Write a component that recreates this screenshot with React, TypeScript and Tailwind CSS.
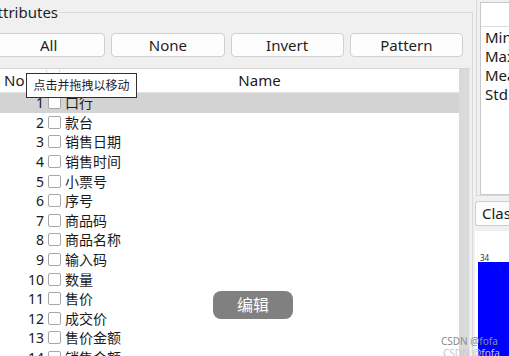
import React from "react";

const ROWS = [
  "口行",
  "款台",
  "销售日期",
  "销售时间",
  "小票号",
  "序号",
  "商品码",
  "商品名称",
  "输入码",
  "数量",
  "售价",
  "成交价",
  "售价金额",
  "销售金额",
];

const FONT = { fontFamily: '"Noto Sans", "Noto Sans CJK SC", sans-serif' };

function ToolButton({ label }: { label: string }) {
  return (
    <button className="h-[24px] rounded-[4px] border border-[#d0d0d0] bg-[#fdfdfd] text-[15px] leading-none text-[#1f1f1f]">
      {label}
    </button>
  );
}

export default function App() {
  return (
    <div
      className="relative flex h-[356px] w-[509px] overflow-hidden bg-[#f0f0f0] text-[#1a1a1a]"
      style={FONT}
    >
      {/* Attributes group */}
      <fieldset className="-ml-[14px] mt-[2px] flex h-[380px] w-[487px] shrink-0 flex-col border border-[#dadada] pl-[5px] pr-[1px]">
        <legend className="-ml-[6px] px-[2px] text-[15px] leading-[20px] text-[#1f1f1f]">
          Attributes
        </legend>
        <div className="mr-[8px] mt-[11px] grid grid-cols-4 gap-[6px]">
          <ToolButton label="All" />
          <ToolButton label="None" />
          <ToolButton label="Invert" />
          <ToolButton label="Pattern" />
        </div>
        <div className="mr-[1px] mt-[11px] flex flex-1 border-t border-[#d6d6d6] bg-white">
          <div className="flex flex-1 flex-col">
            <div className="flex h-[24px] border-b border-[#e3e3e3] text-[15px]">
              <div className="flex w-[55px] items-center border-r border-[#e3e3e3] pl-[12px]">No</div>
              <div className="w-[13px] border-r border-[#e3e3e3]" />
              <div className="flex flex-1 items-center justify-center">Name</div>
            </div>
            {ROWS.map((name, i) => (
              <div
                key={name}
                className={`flex h-[19.6px] items-center text-[14px] ${i === 0 ? "bg-[#d3d3d3]" : ""}`}
              >
                <div className="w-[52px] text-right">{i + 1}</div>
                <div className="ml-[4px] h-[13px] w-[13px] rounded-[2px] border border-[#a8a8a8] bg-white" />
                <div className="ml-[4px]">{name}</div>
              </div>
            ))}
          </div>
          <div className="w-[11px] border-r border-[#e8e8e8] bg-[#dadada]" />
        </div>
      </fieldset>

      {/* right side */}
      <div className="flex flex-1 flex-col pl-[2px]">
        <div className="ml-[1px] h-[197px] border-b border-l border-[#d8d8d8] pl-[3px] pt-[2px]">
          <div className="h-[193px] border border-[#c8c8c8] bg-white">
            <div className="h-[24px] border-b border-[#dcdcdc]" />
            <div className="pl-[4px] pt-[1px] text-[15px] leading-[19px] whitespace-nowrap">
              <div>Min</div>
              <div>Max</div>
              <div>Mean</div>
              <div>StdDev</div>
            </div>
          </div>
        </div>
        <div className="mt-[5px] flex h-[25px] items-center whitespace-nowrap rounded-l-[3px] border border-r-0 border-[#cfcfcf] bg-[#fdfdfd] pl-[6px] text-[15px]">
          Class
        </div>
        <div className="mt-[5px] flex-1 bg-white pl-[3px] pt-[22px]">
          <div className="pl-[2px] text-[8px] leading-[9px] text-[#333]">34</div>
          <div className="h-[120px] bg-[#0000ff]" />
        </div>
      </div>

      {/* tooltip */}
      <div className="absolute left-[26px] top-[73px] flex h-[25px] w-[111px] items-center justify-center border border-[#303030] bg-white text-[12px] text-[#1c1c2c]">
        点击并拖拽以移动
      </div>

      {/* edit button */}
      <div className="absolute left-[213px] top-[291px] flex h-[28px] w-[80px] items-center justify-center rounded-[8px] bg-[#808080] text-[16px] text-white">
        编辑
      </div>

      {/* watermark */}
      <div className="absolute left-[441px] top-[335px] text-[10px] leading-[12px] text-[#8a8a8a]">CSDN @fofa</div>
      <div className="absolute left-[443px] top-[347px] text-[10px] leading-[12px] text-[#c8c8c8]">CSDN @fofa</div>
    </div>
  );
}
